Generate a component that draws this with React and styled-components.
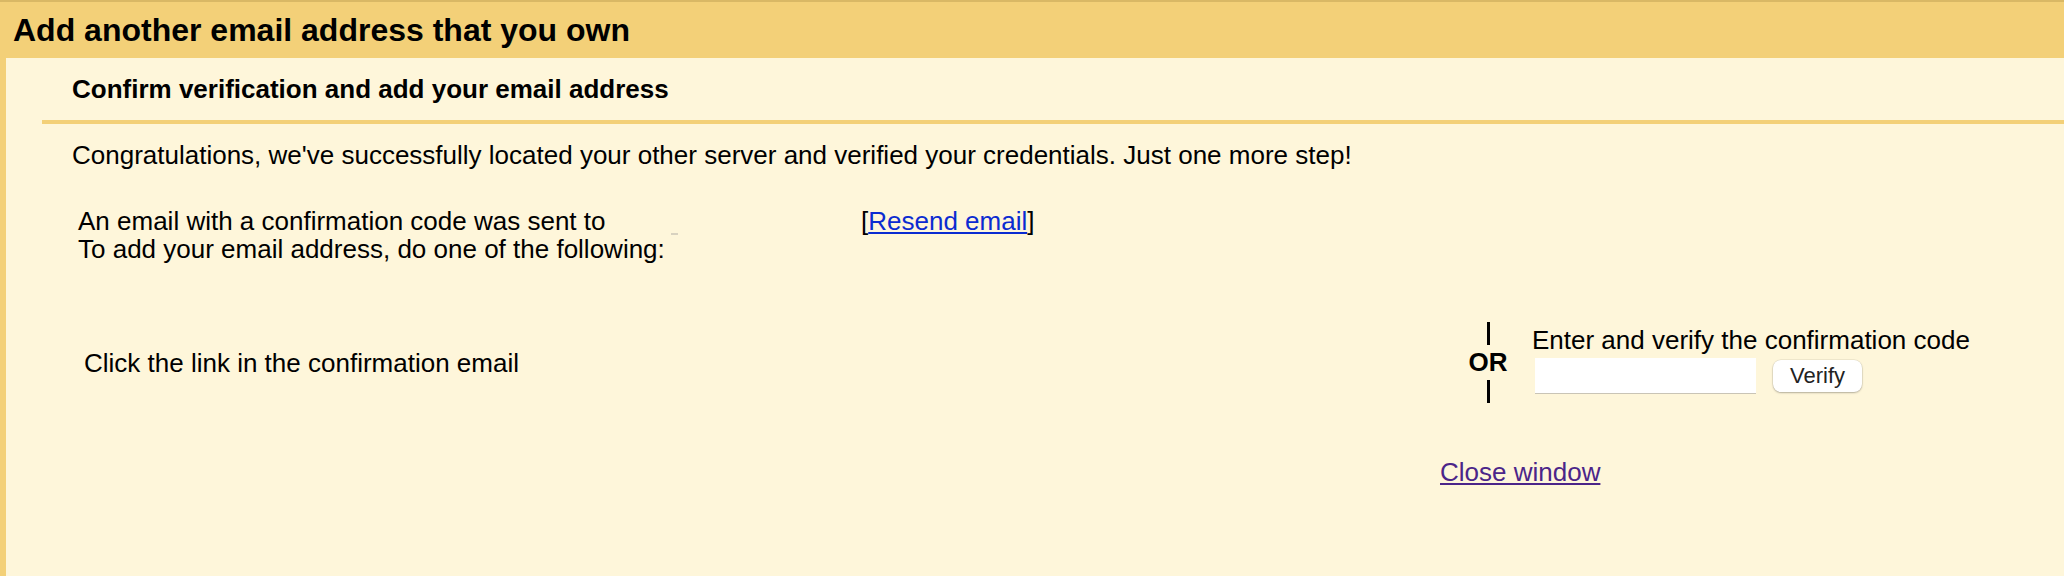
import React from "react";
import styled, { createGlobalStyle } from "styled-components";

const GlobalStyle = createGlobalStyle`
  html, body {
    margin: 0;
    padding: 0;
    background: #fef6da;
  }
  body {
    font-family: "Liberation Sans", Arial, sans-serif;
    color: #000;
  }
`;

const App = () => {
  return (
    <Page>
      <GlobalStyle />
      <Header>
        <Title>Add another email address that you own</Title>
      </Header>

      <Panel>
        <SubHeader>
          <SubTitle>Confirm verification and add your email address</SubTitle>
        </SubHeader>

        <Body>
          <Message>
            Congratulations, we've successfully located your other server and
            verified your credentials. Just one more step!
          </Message>

          <SentBlock>
            <SentLine>
              <SentText>An email with a confirmation code was sent to</SentText>
              <Redacted />
              <Resend>
                [<a href="#resend">Resend email</a>]
              </Resend>
            </SentLine>
            <div>To add your email address, do one of the following:</div>
          </SentBlock>

          <Options>
            <LinkOption>Click the link in the confirmation email</LinkOption>
            <OrColumn>
              <OrBar />
              <OrLabel>OR</OrLabel>
              <OrBar />
            </OrColumn>
            <CodeForm>
              <CodeLabel>Enter and verify the confirmation code</CodeLabel>
              <CodeRow>
                <CodeInput type="text" />
                <VerifyButton type="button">Verify</VerifyButton>
              </CodeRow>
            </CodeForm>
          </Options>

          <Footer>
            <CloseLink href="#close">Close window</CloseLink>
          </Footer>
        </Body>
      </Panel>
    </Page>
  );
};

export default App;

const Page = styled.div`
  width: 2064px;
  height: 576px;
  display: flex;
  flex-direction: column;
  overflow: hidden;
`;

const Header = styled.div`
  height: 56px;
  flex-shrink: 0;
  background: #f3d078;
  border-top: 2px solid #d9b865;
  display: flex;
  align-items: center;
  padding-left: 13px;
`;

const Title = styled.h1`
  margin: 0;
  font-size: 32px;
  font-weight: bold;
  line-height: 1;
`;

const Panel = styled.div`
  flex: 1;
  background: #fef6da;
  border-left: 6px solid #f3d078;
`;

const SubHeader = styled.div`
  margin-left: 36px;
  height: 62px;
  border-bottom: 4px solid #f3d078;
  display: flex;
  align-items: center;
  padding-left: 30px;
`;

const SubTitle = styled.h2`
  margin: 0;
  font-size: 26px;
  font-weight: bold;
`;

const Body = styled.div`
  padding-left: 66px;
  font-size: 26px;
  line-height: 28px;
`;

const Message = styled.p`
  margin: 0;
  padding-top: 17px;
`;

const SentBlock = styled.div`
  margin-top: 38px;
  padding-left: 6px;
`;

const SentLine = styled.div`
  display: flex;
  align-items: flex-start;
`;

const SentText = styled.span`
  width: 593px;
  flex-shrink: 0;
  white-space: nowrap;
`;

const Redacted = styled.span`
  width: 7px;
  height: 2px;
  margin-top: 26px;
  background: #d8d2c0;
`;

const Resend = styled.span`
  margin-left: 183px;
  a {
    color: #0b2bd1;
    text-decoration: underline;
  }
`;

const Options = styled.div`
  display: flex;
  align-items: center;
  margin-top: 59px;
  padding-left: 12px;
`;

const LinkOption = styled.div`
  width: 1384px;
  flex-shrink: 0;
`;

const OrColumn = styled.div`
  width: 40px;
  display: flex;
  flex-direction: column;
  align-items: center;
  gap: 4px;
`;

const OrBar = styled.div`
  width: 3px;
  height: 23px;
  background: #000;
`;

const OrLabel = styled.div`
  font-weight: bold;
  font-size: 26px;
  line-height: 27px;
`;

const CodeForm = styled.div`
  margin: -6px 0 0 24px;
  display: flex;
  flex-direction: column;
  gap: 4px;
`;

const CodeLabel = styled.div`
  line-height: 28px;
`;

const CodeRow = styled.div`
  display: flex;
  align-items: center;
  gap: 17px;
  padding-left: 3px;
`;

const CodeInput = styled.input`
  width: 221px;
  height: 36px;
  box-sizing: border-box;
  border: none;
  border-bottom: 1px solid #c9c4b6;
  background: #fff;
  outline: none;
`;

const VerifyButton = styled.button`
  width: 89px;
  height: 32px;
  border: none;
  border-radius: 8px;
  background: #fff;
  box-shadow: 0 1px 2px rgba(0, 0, 0, 0.25), 0 0 0 0.5px rgba(0, 0, 0, 0.1);
  font-family: "Liberation Sans", Arial, sans-serif;
  font-size: 22px;
  color: #222;
  padding: 0;
`;

const Footer = styled.div`
  margin-top: 55px;
  padding-left: 1368px;
`;

const CloseLink = styled.a`
  font-size: 26px;
  color: #4b2589;
  text-decoration: underline;
`;
